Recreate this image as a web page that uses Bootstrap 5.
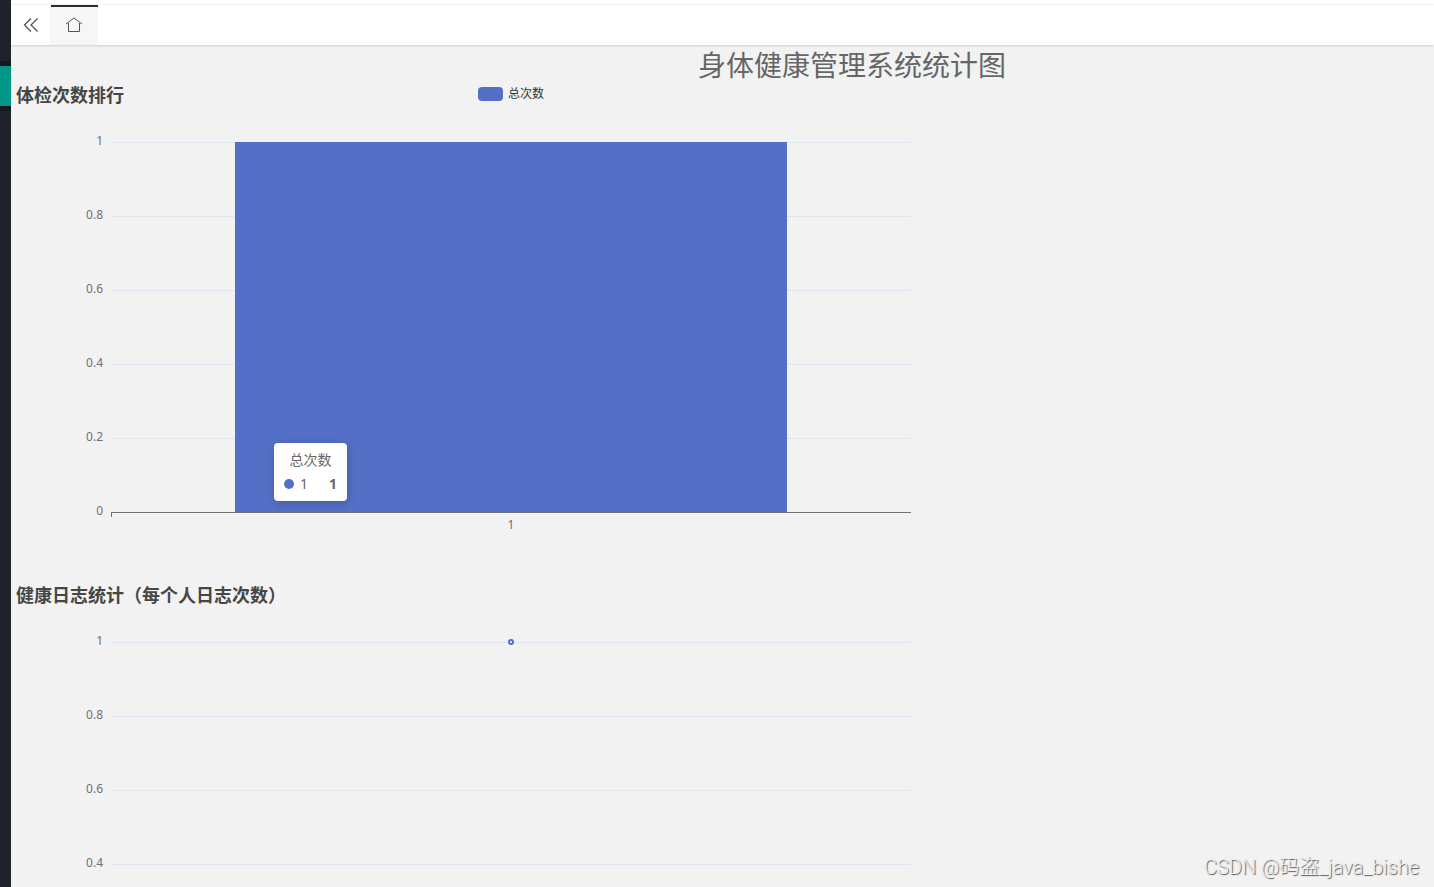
<!DOCTYPE html>
<html lang="zh-CN">
<head>
<meta charset="utf-8">
<meta name="viewport" content="width=device-width, initial-scale=1">
<title>身体健康管理系统</title>
<link href="https://cdn.jsdelivr.net/npm/bootstrap@5.3.0/dist/css/bootstrap.min.css" rel="stylesheet">
<style>
  body { font-family: "Noto Sans", "Noto Sans CJK SC", sans-serif; background: #f2f2f2; color: #666; }
  .side-rail { width: 11px; background: #20222a; padding-top: 61px; }
  .side-group { background: #16181d; padding: 5px 0; }
  .side-link { height: 40px; background: #009688; }
  .top-line { height: 5px; background: #fff; border-bottom: 1px solid #f2f2f2; }
  .tab-strip { height: 40px; background: #fff; box-shadow: 0 1px 2px rgba(0,0,0,.15); }
  .tab-btn { width: 39px; color: #555; }
  .tab-home { width: 48px; background: #f6f6f6; }
  .tab-home::before { content: ""; position: absolute; inset: 0 0 auto 1px; height: 2px; background: #292b34; }
  .scroll-pane { scrollbar-width: none; }
  .scroll-pane::-webkit-scrollbar { display: none; }
  .page-title { font-size: 28px; line-height: 33px; padding: 4px 0 0 259px; font-weight: 400; }
  .chart-panel { width: 1000px; height: 500px; }
  .chart-head { height: 60px; display: grid; grid-template-columns: 1fr auto 1fr; }
  .chart-title { font-size: 18px; line-height: 26px; color: #464646; padding-left: 5px; }
  .legend-key { font-size: 12px; line-height: 24px; gap: 5px; color: #333; }
  .legend-swatch { width: 25px; height: 14px; border-radius: 4px; background: #5470c6; }
  .chart-body { display: grid; grid-template-columns: 1fr 8fr 1fr; }
  .axis-labels { font-size: 12px; line-height: 18px; color: #6e7079; padding-right: 8px; margin-top: -10px; }
  .axis-labels span, .grid-lines span { height: 74px; }
  .grid-lines span { border-top: 1px solid #e0e6f1; }
  .plot-area { height: 370px; }
  .plot-bar { background: #5470c6; width: 69%; height: 370px; }
  .plot-bar, .grid-lines { grid-area: 1 / 1; }
  .x-axis { border-top: 1px solid #6e7079; border-left: 1px solid #6e7079; height: 5px; }
  .x-label { font-size: 12px; line-height: 16px; color: #6e7079; }
  .tip { left: 163px; top: 301px; width: 73px; height: 58px; padding: 5px 10px; font-size: 14px; line-height: 24px; background: #fff; border-radius: 4px; box-shadow: 1px 2px 10px rgba(0,0,0,.2); }
  .tip-dot { width: 10px; height: 10px; background: #5470c6; margin-right: 6px; }
  .point { top: -3px; left: 50%; width: 6px; height: 6px; border: 2px solid #5470c6; background: #fff; }
  .watermark { right: 15px; bottom: 6px; font-family: Roboto, "Noto Sans CJK SC", sans-serif; font-size: 20px; font-weight: 300; line-height: 28px; color: #eee; text-shadow: 1px 1px 1px #555; }
</style>
</head>
<body>
<div class="d-flex vh-100 overflow-hidden position-relative">
  <nav class="side-rail flex-shrink-0" aria-label="菜单">
    <div class="side-group"><a class="side-link d-block" href="#" aria-label="统计"></a></div>
  </nav>
  <main class="flex-grow-1 d-flex flex-column overflow-hidden">
    <div class="top-line flex-shrink-0"></div>
    <div class="tab-strip d-flex flex-shrink-0 position-relative z-1">
      <button class="tab-btn btn p-0 border-0 rounded-0 d-flex align-items-center justify-content-center" type="button" aria-label="收起">
        <svg width="16" height="16" viewBox="0 0 16 16" fill="none" stroke="currentColor" stroke-width="1.3"><path d="M8 1.500 1.500 8 8 14.500M14.500 1.500 8 8l6.500 6.500"/></svg>
      </button>
      <button class="tab-btn tab-home btn p-0 border-0 rounded-0 d-flex align-items-center justify-content-center position-relative" type="button" aria-label="首页">
        <svg width="18" height="16" viewBox="0 0 18 16" fill="none" stroke="currentColor" stroke-width="1"><path d="M1 7 9 1l8 6M3.500 6v8.500h11V6"/></svg>
      </button>
    </div>
    <div class="scroll-pane overflow-auto">
    <h1 class="page-title text-center mb-0">身体健康管理系统统计图</h1>

    <section class="chart-panel">
      <div class="chart-head">
        <h2 class="chart-title fw-bold mb-0">体检次数排行</h2>
        <div class="legend-key d-flex align-items-center align-self-start"><span class="legend-swatch"></span>总次数</div>
      </div>
      <div class="chart-body">
        <div class="axis-labels d-flex flex-column text-end"><span>1</span><span>0.8</span><span>0.6</span><span>0.4</span><span>0.2</span><span>0</span></div>
        <div>
          <div class="plot-area d-grid position-relative">
            <div class="grid-lines d-flex flex-column"><span></span><span></span><span></span><span></span><span></span></div>
            <div class="plot-bar mx-auto"></div>
            <div class="tip position-absolute" role="tooltip">
              <div class="text-center">总次数</div>
              <div class="d-flex align-items-center"><span class="tip-dot rounded-circle"></span>1<b class="ms-auto">1</b></div>
            </div>
          </div>
          <div class="x-axis"></div>
          <div class="x-label text-center">1</div>
        </div>
      </div>
    </section>

    <section class="chart-panel">
      <div class="chart-head">
        <h2 class="chart-title fw-bold mb-0 text-nowrap">健康日志统计（每个人日志次数）</h2>
      </div>
      <div class="chart-body">
        <div class="axis-labels d-flex flex-column text-end"><span>1</span><span>0.8</span><span>0.6</span><span>0.4</span><span>0.2</span><span>0</span></div>
        <div>
          <div class="plot-area d-grid position-relative">
            <div class="grid-lines d-flex flex-column"><span></span><span></span><span></span><span></span><span></span></div>
            <div class="point position-absolute rounded-circle translate-middle-x"></div>
          </div>
          <div class="x-axis"></div>
          <div class="x-label text-center">1</div>
        </div>
      </div>
    </section>
    </div>
  </main>
  <div class="watermark position-absolute">CSDN @码盗_java_bishe</div>
</div>
<script src="https://cdn.jsdelivr.net/npm/bootstrap@5.3.0/dist/js/bootstrap.bundle.min.js"></script>
</body>
</html>
